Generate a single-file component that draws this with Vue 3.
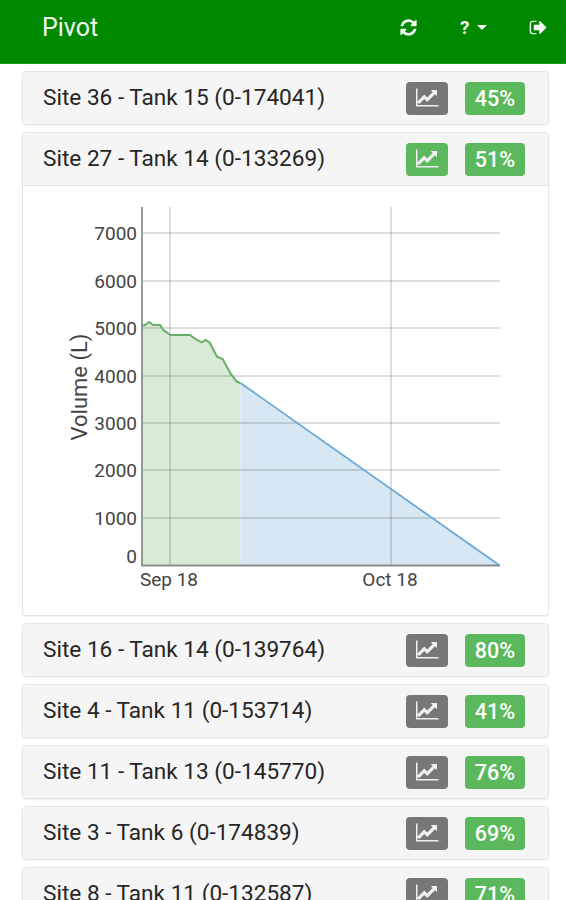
<script setup>
const before = [{ name: 'Site 36 - Tank 15 (0-174041)', pct: 45 }]
const open = { name: 'Site 27 - Tank 14 (0-133269)', pct: 51 }
const after = [
  { name: 'Site 16 - Tank 14 (0-139764)', pct: 80 },
  { name: 'Site 4 - Tank 11 (0-153714)', pct: 41 },
  { name: 'Site 11 - Tank 13 (0-145770)', pct: 76 },
  { name: 'Site 3 - Tank 6 (0-174839)', pct: 69 },
  { name: 'Site 8 - Tank 11 (0-132587)', pct: 71 }
]
const chartPath = 'M1920 1536v128h-1920v-1536h128v1408h1792zm-128-1248v435q0 21-19.5 29.5t-35.5-7.5l-121-121-633 633q-10 10-23 10t-23-10l-233-233-416 416-192-192 585-585q10-10 23-10t23 10l233 233 464-464-121-121q-16-16-7.5-35.5t29.5-19.5h435q14 0 23 9t9 23z'
const ticks = [
  { label: '7000', y: 233 }, { label: '6000', y: 281 }, { label: '5000', y: 328 },
  { label: '4000', y: 376 }, { label: '3000', y: 423 }, { label: '2000', y: 470 },
  { label: '1000', y: 518 }
]
const green = '142,326 145,325 149.3,322 153,325 160,325 164,330.7 170.7,335 190,335 195,338.7 201.7,342.3 205.7,340 210,343 217,356.7 222.7,359 230,372.7 236.7,381.7 240.5,383'
</script>

<template>
  <div class="page">
    <header class="nav">
      <span class="brand">Pivot</span>
      <div class="nav-icons">
        <svg class="ico-refresh" viewBox="0 0 1792 1792" fill="currentColor"><path d="M1639 1056q0 5-1 7-64 268-268 434.5t-478 166.5q-146 0-282.5-55t-243.5-157l-129 129q-19 19-45 19t-45-19-19-45v-448q0-26 19-45t45-19h448q26 0 45 19t19 45-19 45l-137 137q71 66 161 102t187 36q134 0 250-65t186-179q11-17 53-117 8-23 30-23h192q13 0 22.5 9.5t9.5 22.5zm25-800v448q0 26-19 45t-45 19h-448q-26 0-45-19t-19-45 19-45l138-138q-148-137-349-137-134 0-250 65t-186 179q-11 17-53 117-8 23-30 23h-199q-13 0-22.5-9.5t-9.5-22.5v-7q65-268 270-434.5t480-166.5q146 0 284 55.5t245 156.5l130-129q19-19 45-19t45 19 19 45z"/></svg>
        <span class="help"><b>?</b><i class="caret"></i></span>
        <svg class="ico-out" viewBox="0 0 1792 1792" fill="currentColor"><path d="M704 1440q0 4 1 20t.5 26.5-3 23.5-10 19.5-20.5 6.5h-320q-119 0-203.5-84.5t-84.5-203.5v-704q0-119 84.5-203.5t203.5-84.5h320q13 0 22.5 9.5t9.5 22.5q0 4 1 20t.5 26.5-3 23.5-10 19.5-20.5 6.5h-320q-66 0-113 47t-47 113v704q0 66 47 113t113 47h312l11.5 1 11.5 3 8 5.5 7 9 2 13.5zm928-544q0 26-19 45l-544 544q-19 19-45 19t-45-19-19-45v-288h-448q-26 0-45-19t-19-45v-384q0-26 19-45t45-19h448v-288q0-26 19-45t45-19 45 19l544 544q19 19 19 45z"/></svg>
      </div>
    </header>

    <main class="list">
      <section v-for="t in before" :key="t.name" class="panel">
        <div class="head">
          <span class="title">{{ t.name }}</span>
          <span class="btn gray"><svg viewBox="0 0 2048 1792" fill="currentColor"><path :d="chartPath"/></svg></span>
          <span class="badge">{{ t.pct }}%</span>
        </div>
      </section>

      <section class="panel">
        <div class="head open">
          <span class="title">{{ open.name }}</span>
          <span class="btn green"><svg viewBox="0 0 2048 1792" fill="currentColor"><path :d="chartPath"/></svg></span>
          <span class="badge">{{ open.pct }}%</span>
        </div>
        <div class="body">
          <svg class="chart" viewBox="23 186 525 429">
            <polygon points="142,565 142,326 145,325 149.3,322 153,325 160,325 164,330.7 170.7,335 190,335 195,338.7 201.7,342.3 205.7,340 210,343 217,356.7 222.7,359 230,372.7 236.7,381.7 240.5,383 240.5,565" fill="#d9ead7"/>
            <polygon points="240.5,383 499,565 240.5,565" fill="#d7e7f3"/>
            <g stroke="#000" stroke-opacity=".13" stroke-width="2" fill="none">
              <line v-for="t in ticks" :key="t.label" x1="142" x2="500" :y1="t.y" :y2="t.y"/>
              <line x1="170" x2="170" y1="207" y2="565"/>
              <line x1="391" x2="391" y1="207" y2="565"/>
            </g>
            <polyline :points="green" fill="none" stroke="#69ae66" stroke-width="2"/>
            <line x1="240.5" y1="383" x2="499" y2="565" stroke="#6aa9d6" stroke-width="1.8"/>
            <line x1="142" x2="142" y1="207" y2="566" stroke="#8a8f8a" stroke-width="1.8"/>
            <line x1="141" x2="500" y1="565.5" y2="565.5" stroke="#8a8f8e" stroke-width="1.8"/>
            <g class="tick">
              <text v-for="t in ticks" :key="t.label" x="137" :y="t.y + 7" text-anchor="end">{{ t.label }}</text>
              <text x="137" y="563" text-anchor="end">0</text>
            </g>
            <g class="xtick">
              <text x="169" y="586" text-anchor="middle">Sep 18</text>
              <text x="390" y="586" text-anchor="middle">Oct 18</text>
            </g>
            <text class="ylabel" transform="translate(87 387) rotate(-90)" text-anchor="middle">Volume (L)</text>
          </svg>
        </div>
      </section>

      <section v-for="t in after" :key="t.name" class="panel">
        <div class="head">
          <span class="title">{{ t.name }}</span>
          <span class="btn gray"><svg viewBox="0 0 2048 1792" fill="currentColor"><path :d="chartPath"/></svg></span>
          <span class="badge">{{ t.pct }}%</span>
        </div>
      </section>
    </main>
  </div>
</template>

<style>
html, body { margin: 0; background: #fff; height: 900px; overflow: hidden; }
</style>

<style scoped>
.page { font-family: Roboto, "Liberation Sans", sans-serif; color: #333; height: 900px; overflow: hidden; }
.nav {
  box-sizing: border-box; height: 64px; background: #008800; border-bottom: 1px solid #12a012;
  display: flex; align-items: center; justify-content: space-between;
  padding: 0 18px 9px 42px; color: #f2f8f2;
}
.brand { font-size: 25px; line-height: 1; }
.nav-icons { display: flex; align-items: center; }
.ico-refresh { width: 19px; height: 19px; margin-right: 42px; }
.help { display: flex; align-items: center; width: 30px; margin-right: 40px; }
.help b { font-size: 19px; font-weight: 700; line-height: 1; }
.caret {
  width: 0; height: 0; margin-left: 8px;
  border-left: 5px solid transparent; border-right: 5px solid transparent; border-top: 5px solid currentColor;
}
.ico-out { width: 19px; height: 19px; margin-left: -1px; }
.list { padding: 7px 17px 0 22px; display: flex; flex-direction: column; gap: 7px; }
.panel {
  border: 1px solid #e4e4e4; border-radius: 4px; background: #fff; flex: none;
  box-shadow: 0 1px 1px rgba(0,0,0,.05);
}
.head {
  box-sizing: border-box; height: 52px; background: #f5f5f5; border-radius: 3px;
  display: flex; align-items: center; padding: 0 23px 0 20px;
}
.head.open { height: 53px; border-bottom: 1px solid #e4e4e4; border-radius: 3px 3px 0 0; }
.title { flex: 1; font-size: 22.6px; color: #262626; padding-bottom: 1px; }
.btn {
  width: 42px; height: 33px; border-radius: 4px; display: flex; align-items: center; justify-content: center;
  color: #f0f0f0; margin-right: 17px;
}
.btn svg { width: 24px; height: 21px; margin-left: 2px; margin-bottom: 1px; }
.gray { background: #777; }
.green { background: #5cb85c; }
.badge {
  width: 60px; height: 33px; border-radius: 4px; background: #5cb85c; color: #fff;
  font-size: 21.5px; font-weight: 500; display: flex; align-items: center; justify-content: center;
}
.body { height: 429px; }
.chart { display: block; width: 525px; height: 429px; }
.tick text { font-size: 19px; fill: #444; }
.xtick text { font-size: 19px; fill: #444; }
.ylabel { font-size: 22px; fill: #444; }
</style>
